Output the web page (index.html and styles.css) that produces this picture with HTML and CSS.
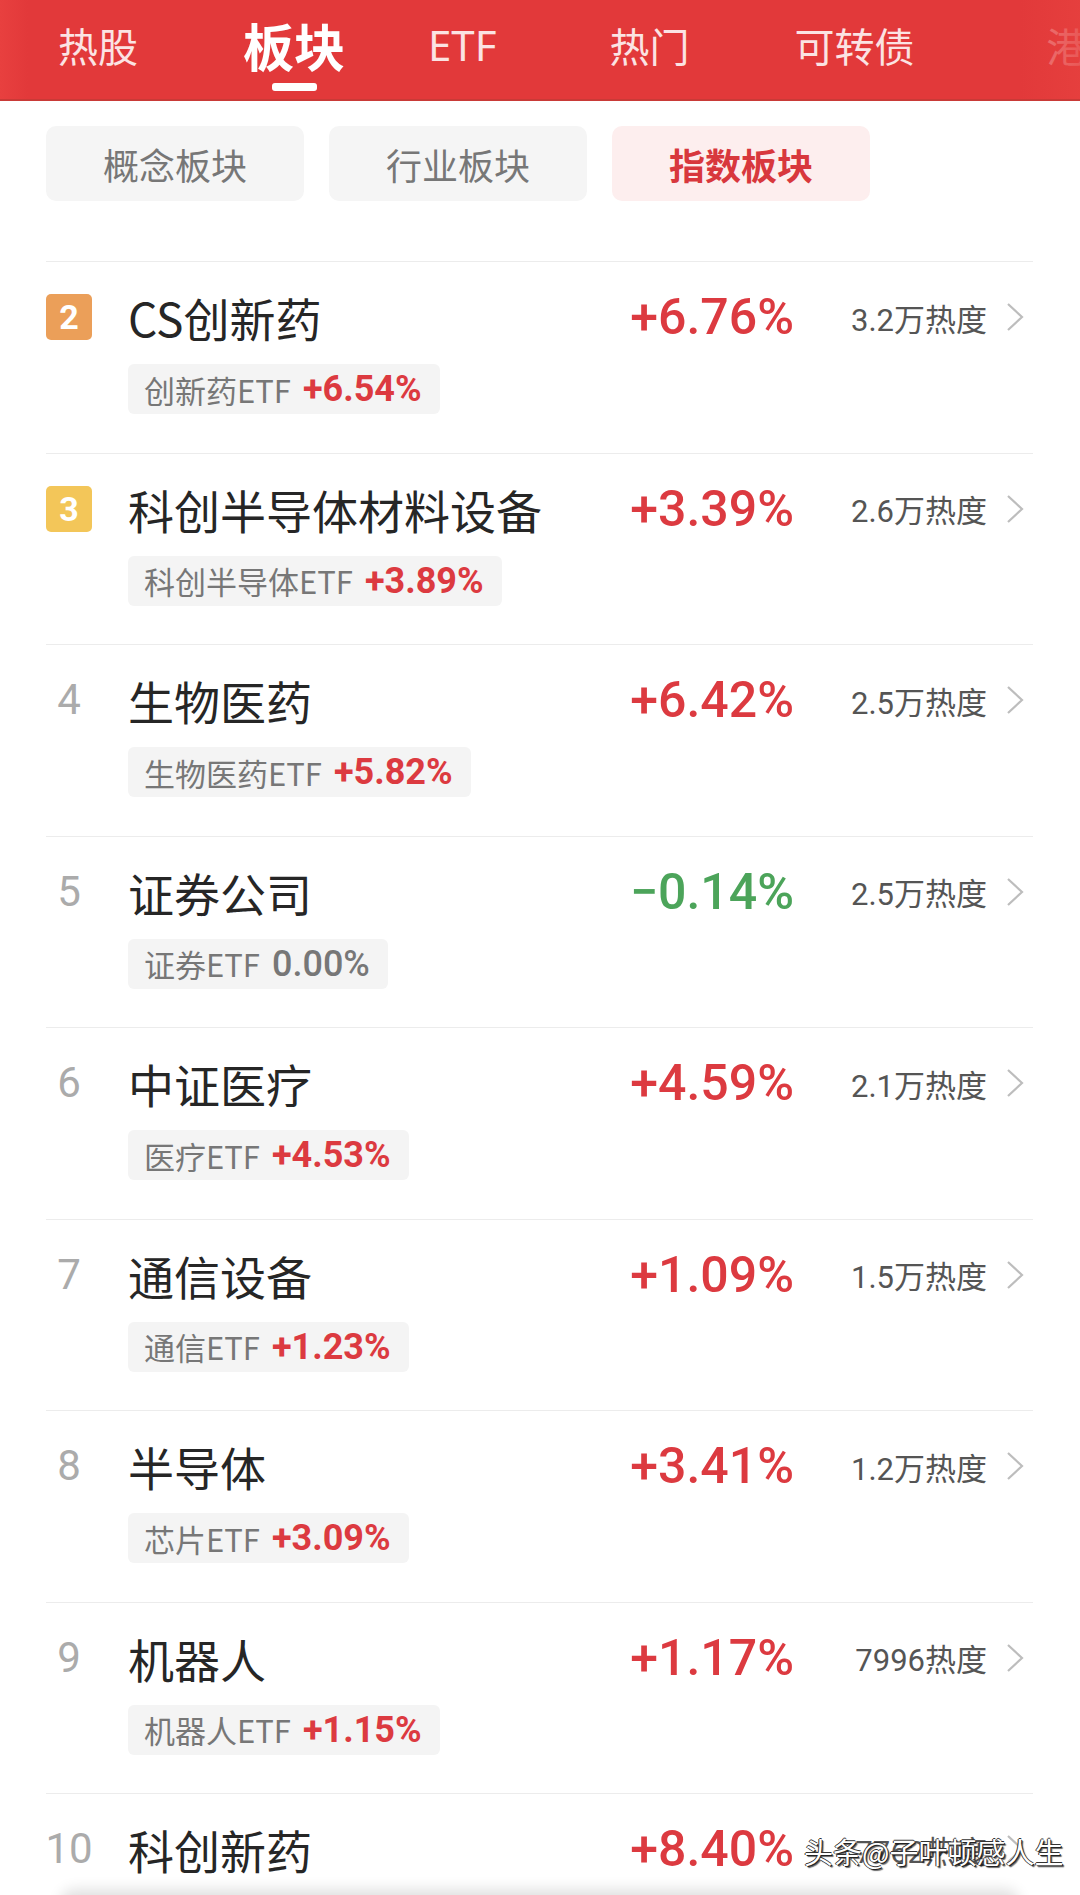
FILE: index.html
```html
<!DOCTYPE html>
<html lang="zh-CN">
<head>
<meta charset="utf-8">
<title>板块</title>
<link rel="stylesheet" href="styles.css">
</head>
<body>
<div class="page">
  <header class="topbar">
    <nav class="tabs">
      <span class="tab">热股</span>
      <span class="tab active">板块</span>
      <span class="tab latin">ETF</span>
      <span class="tab">热门</span>
      <span class="tab">可转债</span>
      <span class="tab last">港股</span>
    </nav>
    <div class="fade"></div>
  </header>

  <div class="segments">
    <button class="seg">概念板块</button>
    <button class="seg">行业板块</button>
    <button class="seg on">指数板块</button>
  </div>

  <ul class="list">
    <li class="row">
      <div class="head">
        <span class="rank"><span class="badge b2">2</span></span>
        <span class="name">CS创新药</span>
        <span class="pct up">+6.76%</span>
        <span class="heat">3.2万热度</span>
        <span class="chev"><svg viewBox="0 0 18 30" width="18" height="30"><path d="M2 2 L16 15 L2 28" fill="none" stroke="#bdbdbd" stroke-width="2.2"/></svg></span>
      </div>
      <div class="chip"><span class="cname">创新药ETF</span><span class="cpct up">+6.54%</span></div>
    </li>
    <li class="row">
      <div class="head">
        <span class="rank"><span class="badge b3">3</span></span>
        <span class="name">科创半导体材料设备</span>
        <span class="pct up">+3.39%</span>
        <span class="heat">2.6万热度</span>
        <span class="chev"><svg viewBox="0 0 18 30" width="18" height="30"><path d="M2 2 L16 15 L2 28" fill="none" stroke="#bdbdbd" stroke-width="2.2"/></svg></span>
      </div>
      <div class="chip"><span class="cname">科创半导体ETF</span><span class="cpct up">+3.89%</span></div>
    </li>
    <li class="row">
      <div class="head">
        <span class="rank"><span class="num">4</span></span>
        <span class="name">生物医药</span>
        <span class="pct up">+6.42%</span>
        <span class="heat">2.5万热度</span>
        <span class="chev"><svg viewBox="0 0 18 30" width="18" height="30"><path d="M2 2 L16 15 L2 28" fill="none" stroke="#bdbdbd" stroke-width="2.2"/></svg></span>
      </div>
      <div class="chip"><span class="cname">生物医药ETF</span><span class="cpct up">+5.82%</span></div>
    </li>
    <li class="row">
      <div class="head">
        <span class="rank"><span class="num">5</span></span>
        <span class="name">证券公司</span>
        <span class="pct down">−0.14%</span>
        <span class="heat">2.5万热度</span>
        <span class="chev"><svg viewBox="0 0 18 30" width="18" height="30"><path d="M2 2 L16 15 L2 28" fill="none" stroke="#bdbdbd" stroke-width="2.2"/></svg></span>
      </div>
      <div class="chip"><span class="cname">证券ETF</span><span class="cpct flat">0.00%</span></div>
    </li>
    <li class="row">
      <div class="head">
        <span class="rank"><span class="num">6</span></span>
        <span class="name">中证医疗</span>
        <span class="pct up">+4.59%</span>
        <span class="heat">2.1万热度</span>
        <span class="chev"><svg viewBox="0 0 18 30" width="18" height="30"><path d="M2 2 L16 15 L2 28" fill="none" stroke="#bdbdbd" stroke-width="2.2"/></svg></span>
      </div>
      <div class="chip"><span class="cname">医疗ETF</span><span class="cpct up">+4.53%</span></div>
    </li>
    <li class="row">
      <div class="head">
        <span class="rank"><span class="num">7</span></span>
        <span class="name">通信设备</span>
        <span class="pct up">+1.09%</span>
        <span class="heat">1.5万热度</span>
        <span class="chev"><svg viewBox="0 0 18 30" width="18" height="30"><path d="M2 2 L16 15 L2 28" fill="none" stroke="#bdbdbd" stroke-width="2.2"/></svg></span>
      </div>
      <div class="chip"><span class="cname">通信ETF</span><span class="cpct up">+1.23%</span></div>
    </li>
    <li class="row">
      <div class="head">
        <span class="rank"><span class="num">8</span></span>
        <span class="name">半导体</span>
        <span class="pct up">+3.41%</span>
        <span class="heat">1.2万热度</span>
        <span class="chev"><svg viewBox="0 0 18 30" width="18" height="30"><path d="M2 2 L16 15 L2 28" fill="none" stroke="#bdbdbd" stroke-width="2.2"/></svg></span>
      </div>
      <div class="chip"><span class="cname">芯片ETF</span><span class="cpct up">+3.09%</span></div>
    </li>
    <li class="row">
      <div class="head">
        <span class="rank"><span class="num">9</span></span>
        <span class="name">机器人</span>
        <span class="pct up">+1.17%</span>
        <span class="heat">7996热度</span>
        <span class="chev"><svg viewBox="0 0 18 30" width="18" height="30"><path d="M2 2 L16 15 L2 28" fill="none" stroke="#bdbdbd" stroke-width="2.2"/></svg></span>
      </div>
      <div class="chip"><span class="cname">机器人ETF</span><span class="cpct up">+1.15%</span></div>
    </li>
    <li class="row">
      <div class="head">
        <span class="rank"><span class="num">10</span></span>
        <span class="name">科创新药</span>
        <span class="pct up">+8.40%</span>
        <span class="heat">7762热度</span>
        <span class="chev"><svg viewBox="0 0 18 30" width="18" height="30"><path d="M2 2 L16 15 L2 28" fill="none" stroke="#bdbdbd" stroke-width="2.2"/></svg></span>
      </div>
      <div class="chip"><span class="cname">创新药ETF</span><span class="cpct up">+6.54%</span></div>
    </li>
  </ul>

  <div class="watermark">头条@子叶顿感人生</div>
  <div class="bottom-shadow"></div>
</div>
</body>
</html>
```

FILE: styles.css
```css
* { box-sizing: border-box; margin: 0; padding: 0; }

html, body {
  width: 1080px;
  height: 1895px;
  overflow: hidden;
  background: #ffffff;
}

body {
  font-family: "Noto Sans CJK SC", "Noto Sans", sans-serif;
  color: #222;
}

.page {
  position: relative;
  width: 1080px;
  height: 1895px;
  overflow: hidden;
}

/* ---------- top red bar ---------- */
.topbar {
  position: relative;
  height: 101px;
  padding-top: 18px;
  background: linear-gradient(90deg, #e8403f 0px, #e2393a 28px, #e2393a 100%);
  border-bottom: 2px solid #c93a37;
}

.tabs {
  display: flex;
  align-items: center;
  height: 54px;
  padding-left: 58px;
  gap: 105px;
  white-space: nowrap;
}

.tab {
  position: relative;
  font-size: 40px;
  line-height: 1;
  color: #fbe3e3;
}

.tab.latin {
  font-family: "Noto Sans", sans-serif;
  font-size: 42px;
  margin-left: -22px;
  margin-right: 8px;
}

.tab.last {
  margin-left: 27px;
}

.tab.active {
  font-size: 51px;
  font-weight: 700;
  color: #ffffff;
}

.tab.active::after {
  content: "";
  position: absolute;
  left: 50%;
  top: 63px;
  width: 45px;
  height: 8px;
  margin-left: -22px;
  border-radius: 3px;
  background: #ffffff;
}

.fade {
  position: absolute;
  right: 0;
  top: 0;
  width: 60px;
  height: 99px;
  background: linear-gradient(90deg, rgba(226,57,58,0.6), rgba(230,64,62,0.85));
}

/* ---------- segments ---------- */
.segments {
  display: flex;
  gap: 25px;
  margin: 25px 0 0 46px;
}

.seg {
  width: 258px;
  height: 75px;
  border: none;
  border-radius: 10px;
  background: #f5f5f5;
  color: #777;
  font-family: "Noto Sans CJK SC", sans-serif;
  font-size: 36px;
}

.seg.on {
  background: #fdeeee;
  color: #d8383d;
  font-weight: 700;
}

/* ---------- list ---------- */
.list {
  list-style: none;
  margin: 60px 47px 0 46px;
}

.row {
  border-top: 1px solid #ececec;
  padding: 28px 0 38.5px;
}

.head {
  display: flex;
  align-items: center;
  height: 54px;
}

.rank {
  width: 46px;
  margin-right: 36px;
  display: flex;
  justify-content: center;
  flex: none;
}

.badge {
  width: 46px;
  height: 46px;
  border-radius: 5px;
  color: #fff;
  font-family: "Roboto", sans-serif;
  font-weight: 700;
  font-size: 34px;
  line-height: 46px;
  text-align: center;
}

.b2 { background: #eb9f59; }
.b3 { background: #f3c659; }

.num {
  font-family: "Roboto", sans-serif;
  font-size: 42px;
  color: #ababab;
  line-height: 1;
}

.name {
  flex: 1;
  font-size: 46px;
  line-height: 1;
  color: #262626;
  white-space: nowrap;
}

.pct {
  font-family: "Roboto", sans-serif;
  font-weight: 500;
  font-size: 50px;
  line-height: 1;
  text-align: right;
  white-space: nowrap;
}

.up { color: #dc3a40; }
.down { color: #4ca45a; }
.flat { color: #777; }

.heat {
  width: 193px;
  text-align: right;
  font-family: "Roboto", "Noto Sans CJK SC", sans-serif;
  font-size: 31px;
  color: #555;
  white-space: nowrap;
}

.chev {
  width: 46px;
  display: flex;
  justify-content: flex-end;
  padding-right: 9px;
  flex: none;
}

.chip {
  display: inline-flex;
  align-items: center;
  height: 50px;
  margin: 20px 0 0 82px;
  padding: 0 18px 0 16px;
  border-radius: 6px;
  background: #f4f4f4;
}

.cname {
  font-family: "Noto Sans CJK SC", sans-serif;
  font-size: 31px;
  color: #777;
  line-height: 1;
}

.cpct {
  margin-left: 12px;
  font-family: "Roboto", sans-serif;
  font-weight: 700;
  font-size: 36px;
  line-height: 1;
}

.cpct.flat {
  font-weight: 500;
  color: #777;
}

/* ---------- overlays ---------- */
.watermark {
  position: absolute;
  left: 804px;
  top: 1837px;
  font-size: 29px;
  line-height: 1;
  color: #ffffff;
  white-space: nowrap;
  text-shadow: 1px 1px 0 #222, -1px 0 0 #333, 0 -1px 0 #333, 2px 2px 1px rgba(0,0,0,0.6);
}

.bottom-shadow {
  position: absolute;
  left: 60px;
  right: 60px;
  bottom: -30px;
  height: 30px;
  border-radius: 20px;
  box-shadow: 0 -6px 14px rgba(0,0,0,0.12);
  background: #fff;
}
```
